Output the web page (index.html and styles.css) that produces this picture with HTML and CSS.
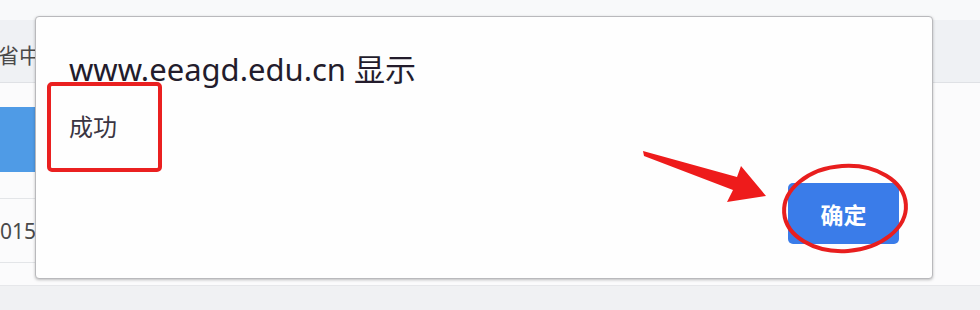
FILE: index.html
```html
<!DOCTYPE html>
<html lang="zh-CN">
<head>
<meta charset="utf-8">
<title>www.eeagd.edu.cn 显示</title>
<link rel="stylesheet" href="styles.css">
</head>
<body>
<div class="page">
  <div class="top-strip"></div>
  <div class="table">
    <div class="row head"><div class="cell"><span class="clip">省中</span></div></div>
    <div class="row action"><div class="cell"><span class="blue-btn"></span></div></div>
    <div class="row data"><div class="cell"><span class="clip date">015</span></div></div>
    <div class="row spacer"><div class="cell"></div></div>
  </div>
  <div class="bottom-strip"></div>
</div>

<div class="dialog">
  <div class="dialog-title">www.eeagd.edu.cn 显示</div>
  <div class="dialog-msg">成功</div>
  <div class="dialog-actions"><button class="ok">确定</button></div>
</div>

<div class="mark-rect"></div>
<svg class="marks" width="980" height="310" viewBox="0 0 980 310">
  <polygon points="643,151 737,177 741,166 766,196 727,202 733,190 644,156" fill="#ee1b1b"/>
  <ellipse cx="845" cy="208.5" rx="61" ry="42.5" fill="none" stroke="#e81e1e" stroke-width="4" transform="rotate(-4 845 208.5)"/>
</svg>
</body>
</html>
```
FILE: styles.css
```css
html, body {
  margin: 0;
  padding: 0;
  width: 980px;
  height: 310px;
  overflow: hidden;
  background: #fbfbfc;
  font-family: "Noto Sans", "Noto Sans CJK SC", sans-serif;
}
.page {
  display: flex;
  flex-direction: column;
  height: 310px;
}
.top-strip {
  height: 20px;
  background: #f8f9fa;
}
.table {
  display: flex;
  flex-direction: column;
}
.row .cell {
  width: 35px;
  box-sizing: border-box;
  border-bottom: 1px solid #e3e5e8;
  color: #4a4a4a;
  font-size: 21px;
  white-space: nowrap;
  overflow: hidden;
}
.clip {
  display: block;
  width: 35px;
  overflow: hidden;
  white-space: nowrap;
}
.row.head {
  height: 62px;
  background: #eff1f4;
  border-bottom: 1px solid #dfe1e5;
}
.row.head .cell {
  border-bottom: none;
  height: 62px;
  line-height: 70px;
}
.row.head .clip {
  margin-left: -2px;
  width: 37px;
}
.row.action .cell {
  height: 116px;
  padding-top: 24px;
}
.blue-btn {
  display: block;
  width: 35px;
  height: 65px;
  background: #4f9be6;
}
.row.data .cell {
  height: 64px;
  line-height: 64px;
}
.row.spacer .cell {
  height: 22px;
  border-bottom: none;
}
.bottom-strip {
  flex: 1;
  background: #f0f1f3;
  border-top: 1px solid #e6e7ea;
}

.dialog {
  position: absolute;
  left: 35px;
  top: 16px;
  width: 898px;
  height: 263px;
  box-sizing: border-box;
  background: #fefefe;
  border: 1px solid #b9b9bc;
  border-radius: 4px;
  box-shadow: 0 1px 3px rgba(0, 0, 0, 0.25);
  padding: 33px 33px 34px 33px;
  display: flex;
  flex-direction: column;
}
.dialog-title {
  font-size: 31px;
  line-height: 38px;
  color: #231c2c;
}
.dialog-msg {
  margin-top: 23px;
  font-size: 24px;
  line-height: 32px;
  color: #3a3542;
}
.dialog-actions {
  margin-top: auto;
  display: flex;
  justify-content: flex-end;
}
.ok {
  width: 111px;
  height: 61px;
  border: none;
  border-radius: 5px;
  background: #3a7ce9;
  color: #ffffff;
  font-family: "Noto Sans CJK SC", sans-serif;
  font-weight: 700;
  font-size: 23px;
  padding: 0;
}

.mark-rect {
  position: absolute;
  left: 47px;
  top: 82px;
  width: 115px;
  height: 90px;
  box-sizing: border-box;
  border: 4px solid #ea2020;
  border-radius: 5px;
}
.marks {
  position: absolute;
  left: 0;
  top: 0;
  pointer-events: none;
}
```
